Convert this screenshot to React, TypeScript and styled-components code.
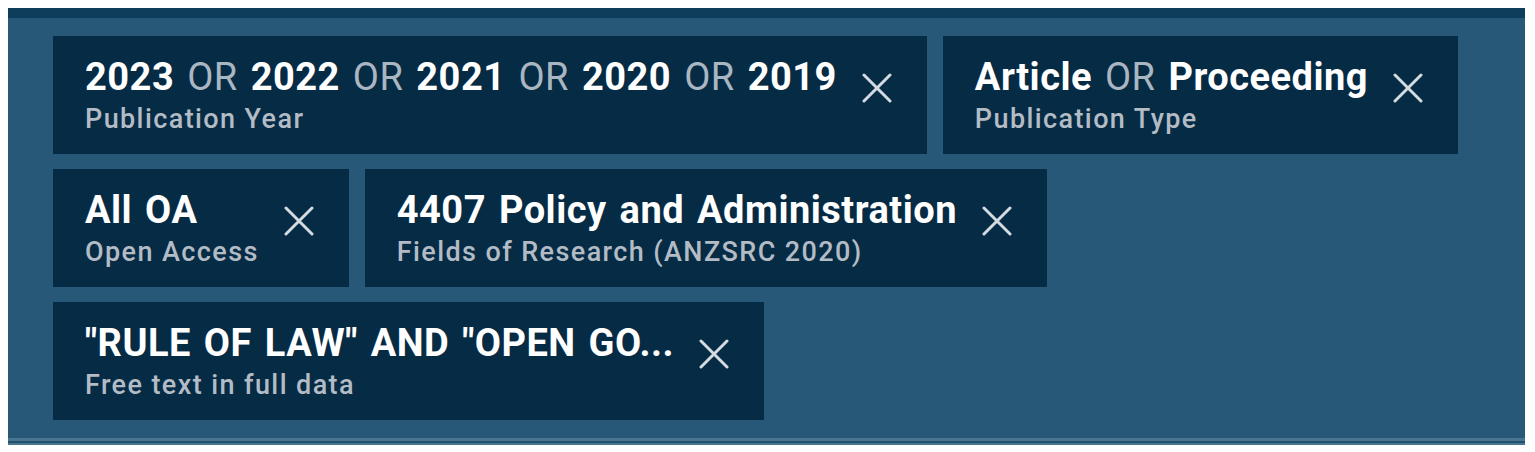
import React from "react";
import styled, { createGlobalStyle } from "styled-components";

const GlobalStyle = createGlobalStyle`
  html, body {
    margin: 0;
    padding: 0;
    background: #ffffff;
  }
  body {
    font-family: Roboto, "Liberation Sans", Arial, sans-serif;
  }
`;

const Panel = styled.div`
  margin: 8px;
  width: 1517px;
  height: 437px;
  box-sizing: border-box;
  background-color: #285877;
  border-top: 10px solid #0e3c5b;
  border-bottom: 2px solid #4a7590;
  box-shadow: inset 0 -2px 0 #22506f, inset 0 -5px 0 #4a7590;
  padding: 18px 45px 16px 45px;
  display: flex;
  flex-wrap: wrap;
  align-content: flex-start;
  gap: 15px 16px;
`;

const Chip = styled.div`
  display: flex;
  align-items: flex-start;
  background-color: #062b45;
  padding: 19px 34px 20px 32px;
  height: 118px;
  box-sizing: border-box;
`;

const Text = styled.div`
  display: flex;
  flex-direction: column;
`;

const Title = styled.div`
  font-size: 38px;
  line-height: 45px;
  font-weight: 700;
  letter-spacing: 0.5px;
  word-spacing: 3px;
  color: #ffffff;
  white-space: nowrap;
`;

const Joiner = styled.span`
  font-weight: 400;
  color: #aab6c1;
`;

const Label = styled.div`
  margin-top: 4px;
  font-size: 27px;
  line-height: 30px;
  font-weight: 500;
  letter-spacing: 1.4px;
  color: #b3bcc5;
  white-space: nowrap;
`;

const Close = styled.button`
  margin: 18px 0 0 24px;
  padding: 0;
  width: 32px;
  height: 30px;
  border: none;
  background: none;
  color: #d5dbe0;
  cursor: pointer;
  flex-shrink: 0;
`;

type Filter = {
  terms: string[];
  joiner?: string;
  label: string;
};

const filters: Filter[] = [
  { terms: ["2023", "2022", "2021", "2020", "2019"], joiner: "OR", label: "Publication Year" },
  { terms: ["Article", "Proceeding"], joiner: "OR", label: "Publication Type" },
  { terms: ["All OA"], label: "Open Access" },
  { terms: ["4407 Policy and Administration"], label: "Fields of Research (ANZSRC 2020)" },
  { terms: ['"RULE OF LAW" AND "OPEN GO...'], label: "Free text in full data" },
];

const CloseIcon = () => (
  <svg width="32" height="30" viewBox="0 0 32 30" fill="none">
    <path d="M3 2 L29 28 M29 2 L3 28" stroke="currentColor" strokeWidth="3" strokeLinecap="round" />
  </svg>
);

const App: React.FC = () => {
  return (
    <>
      <GlobalStyle />
      <Panel>
        {filters.map((f) => (
          <Chip key={f.label}>
            <Text>
              <Title>
                {f.terms.map((t, i) => (
                  <React.Fragment key={t}>
                    {i > 0 && <Joiner> {f.joiner} </Joiner>}
                    {t}
                  </React.Fragment>
                ))}
              </Title>
              <Label>{f.label}</Label>
            </Text>
            <Close aria-label="Remove filter">
              <CloseIcon />
            </Close>
          </Chip>
        ))}
      </Panel>
    </>
  );
};

export default App;
